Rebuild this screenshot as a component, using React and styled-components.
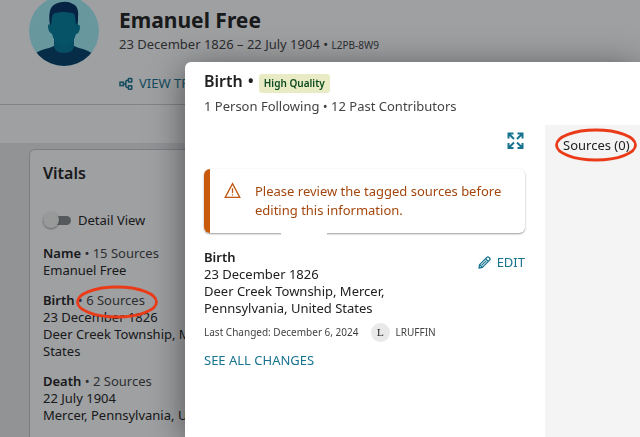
import React, { useState } from "react";
import styled, { createGlobalStyle } from "styled-components";

const GlobalStyle = createGlobalStyle`
    * {
        box-sizing: border-box;
    }
    body {
        margin: 0;
        background: #e9e9ea;
        color: #202121;
        font-family: "Noto Sans", "Open Sans", sans-serif;
        font-size: 13px;
        line-height: 17px;
        overflow: hidden;
    }
    h1, h2, h3, p {
        margin: 0;
    }
`;

const Page = styled.div`
    height: 100vh;
    overflow: hidden;
`;

const Header = styled.header`
    display: flex;
    gap: 20px;
    height: 105px;
    padding: 0 29px;
    background: #fff;
    border-bottom: 1px solid #cfcfd0;
`;

const Portrait = styled.svg`
    flex: none;
    width: 70px;
    height: 70px;
    margin-top: -4px;
`;

const PersonInfo = styled.div`
    display: flex;
    flex-direction: column;
    align-items: flex-start;
    padding-top: 6px;
`;

const PersonName = styled.h1`
    font-size: 21px;
    font-weight: 700;
    line-height: 28px;
`;

const Lifespan = styled.p`
    margin-top: 2px;
    color: #424344;
`;

const Small = styled.span`
    font-size: 10px;
`;

const TextButton = styled.button`
    display: inline-flex;
    align-items: center;
    gap: 6px;
    margin: 0;
    padding: 0;
    border: 0;
    background: none;
    color: #17748f;
    font: inherit;
    cursor: pointer;
`;

const ViewTree = styled(TextButton)`
    margin-top: 21px;
`;

const TabStrip = styled.div`
    height: 38px;
    background: #fff;
`;

const Columns = styled.main`
    display: grid;
    grid-template-columns: 3fr 2fr;
    gap: 16px;
    padding: 6px 16px 0 29px;
`;

const Card = styled.section`
    min-height: 100vh;
    padding: 13px;
    background: #fff;
    border: 1px solid #c6c7c8;
    border-radius: 6px;
`;

const CardTitle = styled.h2`
    font-size: 16px;
    font-weight: 600;
    line-height: 20px;
`;

const Toggle = styled.label`
    display: flex;
    align-items: center;
    gap: 7px;
    margin: 29px 0 16px;
`;

const ToggleInput = styled.input`
    appearance: none;
    position: relative;
    width: 28px;
    height: 9px;
    margin: 0;
    border-radius: 5px;
    background: #878a8c;

    &::before {
        content: "";
        position: absolute;
        top: -4px;
        left: ${(props) => (props.checked ? "12px" : "0")};
        width: 16px;
        height: 16px;
        border-radius: 50%;
        background: #f4f4f1;
        box-shadow: 0 1px 2px rgba(0, 0, 0, 0.4);
    }
`;

const Fact = styled.div`
    margin-bottom: 13px;
`;

const FactLabel = styled.strong`
    font-weight: 600;
`;

const Muted = styled.span`
    color: #424344;
`;

const Circled = styled.span`
    position: relative;
    white-space: nowrap;
`;

const Ring = styled.svg`
    position: absolute;
    top: 50%;
    left: 50%;
    width: 83px;
    height: 34px;
    transform: translate(-50%, -50%);
    pointer-events: none;
    overflow: visible;
`;

const RingLayer = styled.div`
    position: absolute;
    z-index: 3;
    left: 75px;
    top: 286px;
    width: 83px;
    height: 32px;
    pointer-events: none;
`;

const Backdrop = styled.div`
    position: fixed;
    inset: 0;
    z-index: 2;
    display: flex;
    padding: 62px 0 0 185px;
    background: rgba(15, 17, 22, 0.4);
`;

const Dialog = styled.section`
    flex: 1;
    display: flex;
    flex-direction: column;
    background: #fff;
    border-radius: 6px 0 0 0;
    box-shadow: 0 6px 36px rgba(0, 0, 0, 0.5);
`;

const DialogHeader = styled.header`
    padding: 7px 19px 10px;
`;

const TitleRow = styled.div`
    display: flex;
    align-items: center;
    gap: 5px;
    height: 24px;
    margin-bottom: 5px;
`;

const Badge = styled.span`
    margin-top: 4px;
    padding: 0 5px;
    border-radius: 3px;
    background: #e8ebc4;
    color: #0c4a20;
    font-size: 10px;
    font-weight: 600;
    line-height: 19px;
`;

const DialogBody = styled.div`
    flex: 1;
    display: grid;
    grid-template-columns: 1fr 95px;
`;

const Detail = styled.div`
    padding: 7px 20px 0 19px;
`;

const ExpandRow = styled.div`
    display: flex;
    justify-content: flex-end;
    margin-bottom: 19px;
`;

const Alert = styled.div`
    position: relative;
    display: flex;
    gap: 14px;
    margin-bottom: 16px;
    padding: 13px 20px 13px 14px;
    border-left: 6px solid #c95a0c;
    border-radius: 6px;
    box-shadow: 0 1px 2px rgba(0, 0, 0, 0.4);
    color: #a4470f;
    line-height: 19px;

    &::after {
        content: "";
        position: absolute;
        left: 71px;
        bottom: -4px;
        width: 46px;
        height: 5px;
        background: #fff;
    }
`;

const FactRow = styled.div`
    display: flex;
    justify-content: space-between;
    align-items: flex-start;
`;

const FactText = styled.div`
    max-width: 200px;
`;

const EditButton = styled(TextButton)`
    margin-top: 5px;
`;

const Changed = styled.div`
    display: flex;
    align-items: center;
    gap: 6px;
    margin: 6px 0 10px;
    color: #424344;
    font-size: 10px;
`;

const Initial = styled.span`
    width: 19px;
    margin-left: 6px;
    border-radius: 50%;
    background: #e9e9ea;
    color: #202121;
    font-family: "DejaVu Serif", serif;
    line-height: 19px;
    text-align: center;
`;

const SourcesPanel = styled.aside`
    padding: 12px 0 0 18px;
    background: #f4f4f4;
`;

const PortraitIcon = () => (
    <Portrait viewBox="0 0 70 70" role="img" aria-label="Portrait">
        <defs>
            <clipPath id="round">
                <circle cx="35" cy="35" r="35" />
            </clipPath>
        </defs>
        <g clipPath="url(#round)">
            <rect width="70" height="70" fill="#a5f1f9" />
            <path d="M4 60Q8 55 16 53Q25 51 27 48H43Q45 51 54 53Q61 55 66 60V70H4Z" fill="#003f69" />
            <path d="M25 42H45V51Q43 57 35 57Q27 57 25 51Z" fill="#007797" />
            <path d="M21 29Q20 12 29 10H42Q50 13 49 29Q51 28 51 32Q50 38 47 38Q45 46 40 49Q35 51 30 49Q25 46 23 38Q19 36 19 30Q19 27 21 29Z" fill="#007f9f" />
            <path d="M21 29Q19 18 22 12Q25 7 33 6Q39 5 44 8L47 10Q50 15 49 21Q49 27 47 29L46 21Q46 17 42 17Q34 15 27 17Q24 17 23 21L22 29Z" fill="#002f61" />
        </g>
    </Portrait>
);

const TreeIcon = () => (
    <svg width="14" height="14" viewBox="0 0 14 14" fill="none" stroke="currentColor" strokeWidth="1.5">
        <rect x="1" y="5.2" width="3.4" height="3.4" />
        <rect x="9.4" y="1.6" width="3.4" height="3.4" rx="0.5" />
        <rect x="9.4" y="8.8" width="3.4" height="3.4" rx="0.5" />
        <path d="M4.4 6.9H6.8M9.4 3.3H8.4Q6.8 3.3 6.8 5V8.8Q6.8 10.5 8.4 10.5H9.4" />
    </svg>
);

const ExpandIcon = () => (
    <svg width="18" height="18" viewBox="0 0 18 18" fill="none" stroke="currentColor" strokeWidth="2">
        <path d="M1.5 6.5V1.5H6.5M2 2L7 7M10.5 1.5H15.5V6.5M15 2L10 7M1.5 11V16H6.5M2 15.5L7 10.5M15.5 11V16H10.5M15 15.5L10 10.5" />
    </svg>
);

const WarningIcon = () => (
    <svg width="17" height="17" viewBox="0 0 17 17" fill="none" stroke="#c0560f" strokeWidth="1.3">
        <path d="M8.5 1.6L15.8 15.4H1.2Z" />
        <path d="M8.5 6.2V11M8.5 12.2V13.6" />
    </svg>
);

const PencilIcon = () => (
    <svg width="13" height="13" viewBox="0 0 13 13" fill="none" stroke="currentColor" strokeWidth="1.3" strokeLinejoin="round">
        <path d="M1 12L1.6 8.6L8.6 1.6Q9.8 0.4 11 1.4L11.6 2Q12.6 3.2 11.4 4.4L4.4 11.4Z" />
        <path d="M7.6 2.6L10.4 5.4M1.6 8.6L4.4 11.4M3.6 9.4L8.4 4.6" />
    </svg>
);

const RedRing = () => (
    <Ring viewBox="0 0 83 34" aria-hidden="true">
        <ellipse cx="41.5" cy="17" rx="39.5" ry="15" fill="none" stroke="#ea3a18" strokeWidth="2.8" />
    </Ring>
);

const facts = [
    { label: "Name", sources: "15 Sources", lines: ["Emanuel Free"] },
    {
        label: "Birth",
        sources: "6 Sources",
        lines: ["23 December 1826", "Deer Creek Township, Mercer, Pennsylvania, United States"],
    },
    { label: "Death", sources: "2 Sources", lines: ["22 July 1904", "Mercer, Pennsylvania, United States"] },
];

const App = () => {
    const [detailView, setDetailView] = useState(false);
    return (
        <>
            <GlobalStyle />
            <Page>
                <Header>
                    <PortraitIcon />
                    <PersonInfo>
                        <PersonName>Emanuel Free</PersonName>
                        <Lifespan>
                            23 December 1826 – 22 July 1904 • <Small>L2PB-8W9</Small>
                        </Lifespan>
                        <ViewTree>
                            <TreeIcon />
                            VIEW TREE
                        </ViewTree>
                    </PersonInfo>
                </Header>
                <TabStrip />
                <Columns>
                    <Card>
                        <CardTitle>Vitals</CardTitle>
                        <Toggle>
                            <ToggleInput
                                type="checkbox"
                                checked={detailView}
                                onChange={(e) => setDetailView(e.target.checked)}
                            />
                            Detail View
                        </Toggle>
                        {facts.map((fact) => (
                            <Fact key={fact.label}>
                                <FactLabel>{fact.label}</FactLabel> <Muted>• {fact.sources}</Muted>
                                {fact.lines.map((line) => (
                                    <p key={line}>{line}</p>
                                ))}
                            </Fact>
                        ))}
                    </Card>
                </Columns>
            </Page>
            <Backdrop>
                <Dialog role="dialog" aria-labelledby="dialog-title">
                    <DialogHeader>
                        <TitleRow>
                            <CardTitle id="dialog-title">Birth</CardTitle>
                            <CardTitle as="span">•</CardTitle>
                            <Badge>High Quality</Badge>
                        </TitleRow>
                        <Muted>1 Person Following • 12 Past Contributors</Muted>
                    </DialogHeader>
                    <DialogBody>
                        <Detail>
                            <ExpandRow>
                                <TextButton aria-label="Expand">
                                    <ExpandIcon />
                                </TextButton>
                            </ExpandRow>
                            <Alert role="alert">
                                <WarningIcon />
                                <p>
                                    Please review the tagged sources before
                                    <br />
                                    editing this information.
                                </p>
                            </Alert>
                            <FactRow>
                                <FactText>
                                    <FactLabel>Birth</FactLabel>
                                    <p>23 December 1826</p>
                                    <p>Deer Creek Township, Mercer, Pennsylvania, United States</p>
                                </FactText>
                                <EditButton>
                                    <PencilIcon />
                                    EDIT
                                </EditButton>
                            </FactRow>
                            <Changed>
                                Last Changed: December 6, 2024
                                <Initial>L</Initial>
                                LRUFFIN
                            </Changed>
                            <TextButton>SEE ALL CHANGES</TextButton>
                        </Detail>
                        <SourcesPanel>
                            <Circled>
                                Sources (0)
                                <RedRing />
                            </Circled>
                        </SourcesPanel>
                    </DialogBody>
                </Dialog>
            </Backdrop>
            <RingLayer>
                <RedRing />
            </RingLayer>
        </>
    );
};

export default App;
